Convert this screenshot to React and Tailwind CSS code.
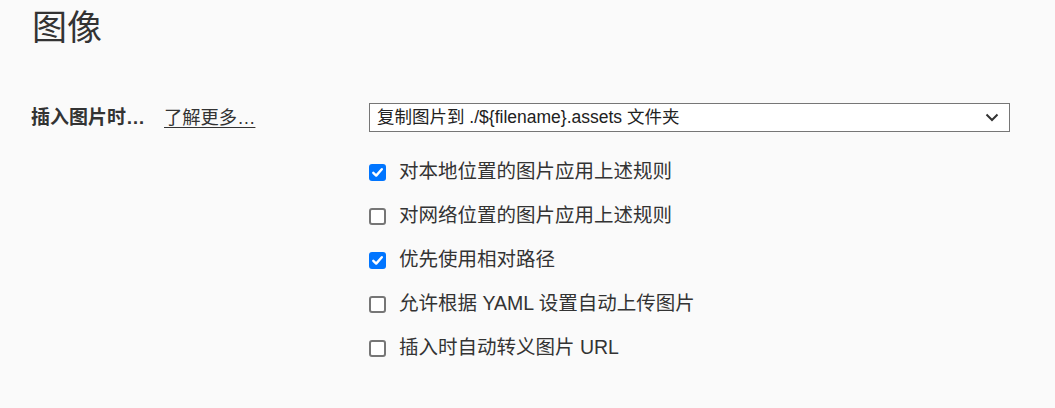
import React from "react";

const font = { fontFamily: '"Liberation Sans", "Noto Sans CJK SC", sans-serif' };

function Check({ checked, label }) {
  return (
    <label className="flex items-center h-[44px]">
      {checked ? (
        <span className="w-[17px] h-[17px] rounded-[3px] bg-[#0075ff] flex items-center justify-center">
          <svg width="13" height="13" viewBox="0 0 13 13">
            <path d="M2.3 6.8 L5.2 9.6 L10.8 3.2" fill="none" stroke="#fff" strokeWidth="2.4" strokeLinecap="round" strokeLinejoin="round" />
          </svg>
        </span>
      ) : (
        <span className="w-[17px] h-[17px] rounded-[3px] border-2 border-[#767676] bg-white" />
      )}
      <span className="ml-[13px] text-[19.5px] text-[#333]">{label}</span>
    </label>
  );
}

export default function App() {
  return (
    <div className="w-[1055px] h-[408px] bg-[#fafafa] text-[#333] overflow-hidden" style={font}>
      <h1 className="pl-[32px] pt-[3px] text-[35px] leading-[50px] text-[#333]">图像</h1>
      <div className="flex mt-[50px]">
        <div className="w-[369px] shrink-0 pl-[31px] flex items-start pt-[1px]">
          <span className="font-bold text-[19px]">插入图片时…</span>
          <a className="ml-[19px] text-[18.3px] underline underline-offset-[3px]">了解更多…</a>
        </div>
        <div className="flex flex-col">
          <div className="w-[641px] h-[29px] border border-[#767676] bg-white flex items-center justify-between pl-[7px] pr-[10px]">
            <span className="text-[17.5px] text-[#222]">复制图片到 ./${"{filename}"}.assets 文件夹</span>
            <svg width="14" height="9" viewBox="0 0 14 9">
              <path d="M1.5 1.5 L7 7 L12.5 1.5" fill="none" stroke="#333" strokeWidth="2" />
            </svg>
          </div>
          <div className="flex flex-col mt-[18px]">
            <Check checked label="对本地位置的图片应用上述规则" />
            <Check label="对网络位置的图片应用上述规则" />
            <Check checked label="优先使用相对路径" />
            <Check label="允许根据 YAML 设置自动上传图片" />
            <Check label="插入时自动转义图片 URL" />
          </div>
        </div>
      </div>
    </div>
  );
}
